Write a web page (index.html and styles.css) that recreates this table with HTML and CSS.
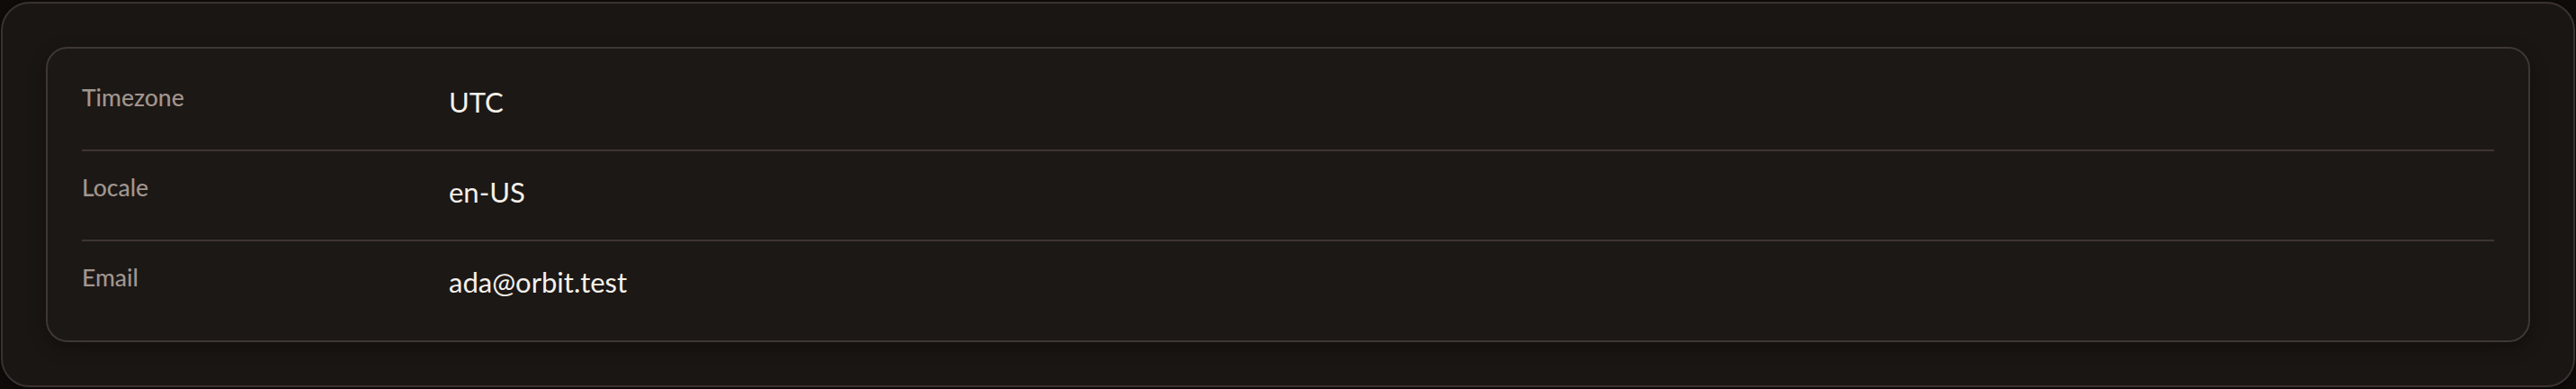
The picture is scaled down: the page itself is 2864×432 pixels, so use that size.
FILE: index.html
```html
<!DOCTYPE html>
<html lang="en">
<head>
<meta charset="utf-8">
<title>Preferences</title>
<link rel="stylesheet" href="styles.css">
</head>
<body>
  <section class="panel">
    <dl class="details">
      <div class="row">
        <dt class="label">Timezone</dt>
        <dd class="value">UTC</dd>
      </div>
      <div class="row">
        <dt class="label">Locale</dt>
        <dd class="value">en-US</dd>
      </div>
      <div class="row">
        <dt class="label">Email</dt>
        <dd class="value">ada@orbit.test</dd>
      </div>
    </dl>
  </section>
</body>
</html>
```

FILE: styles.css
```css
* { box-sizing: border-box; }

html, body {
  margin: 0;
  background: #0f0c0a;
}

body {
  padding: 2px 1px;
  font-family: "Lato", "Noto Sans", sans-serif;
}

.panel {
  height: 428px;
  border: 2px solid #3a322e;
  border-radius: 32px;
  background: #1a1613;
  padding: 48px;
  box-shadow: 0 4px 16px rgba(0, 0, 0, 0.4);
}

.details {
  margin: 0;
  border: 2px solid #3f3733;
  border-radius: 24px;
  background: #1c1815;
  padding: 14px 38px 12px;
  box-shadow: 0 6px 18px rgba(0, 0, 0, 0.35);
}

.row {
  display: grid;
  grid-template-columns: 360px 1fr;
  column-gap: 48px;
  align-items: start;
  padding: 27px 0 35px;
  border-bottom: 2px solid #3e3532;
}

.row:last-child {
  border-bottom: none;
}

.label {
  margin: 0;
  font-size: 26.5px;
  line-height: 26px;
  font-weight: 500;
  color: #a0958e;
}

.value {
  margin: 0;
  font-size: 31px;
  line-height: 36px;
  font-weight: 400;
  color: #f5f0ea;
}
```
